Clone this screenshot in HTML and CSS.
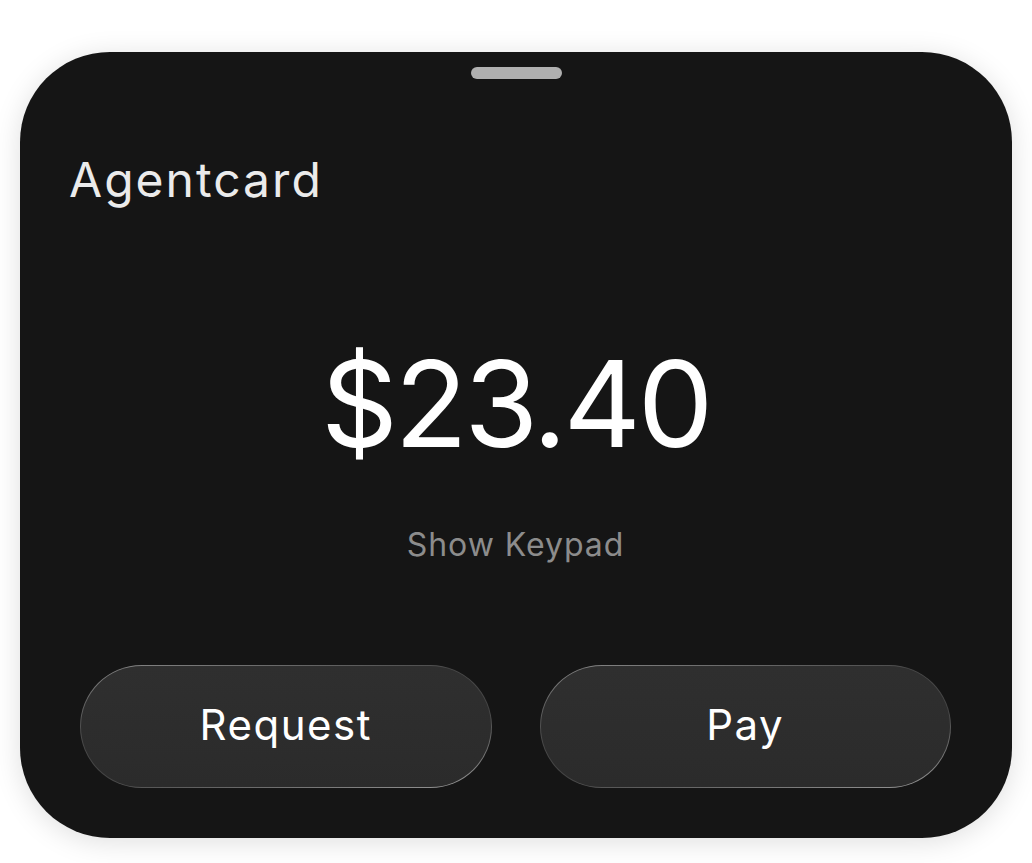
FILE: index.html
```html
<!DOCTYPE html>
<html lang="en">
<head>
<meta charset="utf-8">
<title>Agentcard</title>
<link rel="stylesheet" href="styles.css">
</head>
<body>
<main class="card">
  <div class="handle"></div>
  <h1 class="title">Agentcard</h1>
  <div class="amount">$23.40</div>
  <div class="keypad">Show Keypad</div>
  <div class="actions">
    <button class="btn">Request</button>
    <button class="btn">Pay</button>
  </div>
</main>
</body>
</html>
```
FILE: styles.css
```css
html, body {
  margin: 0;
  padding: 0;
  background: #ffffff;
}
body {
  font-family: Inter, "Noto Sans", sans-serif;
  padding: 52px 20px 25px;
}
.card {
  box-sizing: border-box;
  width: 992px;
  height: 786px;
  background: #151515;
  border-radius: 90px;
  box-shadow: 0 4px 28px rgba(0, 0, 0, 0.13);
  display: flex;
  flex-direction: column;
  padding: 15px 61px 0 60px;
}
.handle {
  align-self: center;
  width: 91px;
  height: 12px;
  border-radius: 6px;
  background: #b0b0b0;
  margin-left: 1px;
}
.title {
  margin: 72px 0 0 -11px;
  font-size: 48px;
  line-height: 58px;
  font-weight: 400;
  color: #ebebeb;
  letter-spacing: 0.042em;
}
.amount {
  margin-top: 122px;
  text-align: center;
  font-size: 120px;
  line-height: 145px;
  font-weight: 400;
  color: #ffffff;
  letter-spacing: -0.028em;
}
.keypad {
  margin-top: 49px;
  text-align: center;
  font-size: 32px;
  line-height: 39px;
  color: #8c8c8c;
  letter-spacing: 0.03em;
}
.actions {
  margin-top: 101px;
  display: flex;
  gap: 48px;
}
.btn {
  flex: 1;
  height: 123px;
  border-radius: 62px;
  border: 1.5px solid transparent;
  background:
    linear-gradient(180deg, #2f2f2f, #2b2b2b) padding-box,
    linear-gradient(170deg, #8a8a8a 0%, #4a4a4a 35%, #444444 60%, #9a9a9a 100%) border-box;
  color: #ffffff;
  font-family: Inter, "Noto Sans", sans-serif;
  font-size: 42px;
  font-weight: 400;
  letter-spacing: 0.036em;
  line-height: 1;
  padding: 0 0 4px;
}
```
